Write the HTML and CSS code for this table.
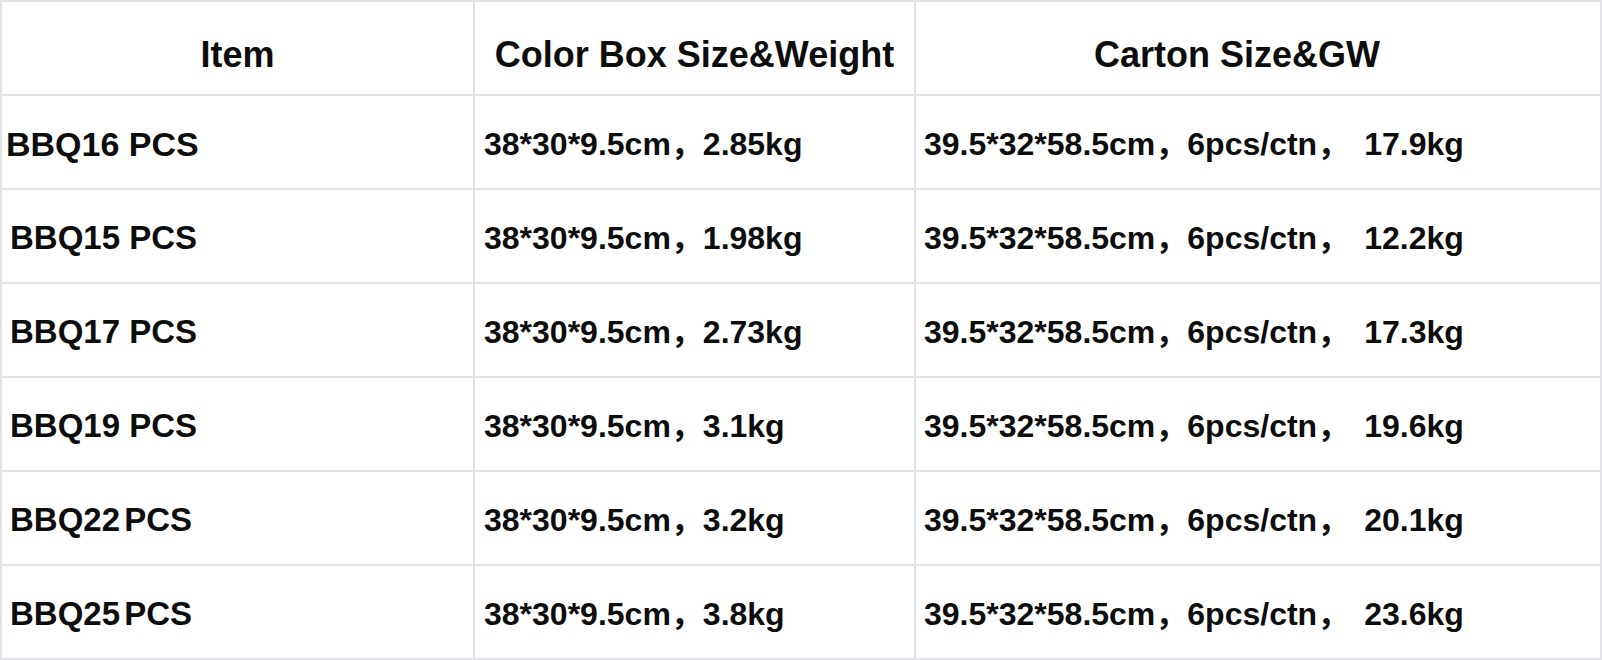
FILE: index.html
```html
<!DOCTYPE html>
<html lang="en">
<head>
<meta charset="utf-8">
<title>Packing specification</title>
<link rel="stylesheet" href="styles.css">
</head>
<body>
<div class="sheet">
  <div class="cell head">Item</div>
  <div class="cell head">Color Box Size&amp;Weight</div>
  <div class="cell head head-carton">Carton Size&amp;GW</div>

  <div class="cell item item-first">BBQ16 PCS</div>
  <div class="cell box">38*30*9.5cm，2.85kg</div>
  <div class="cell carton">39.5*32*58.5cm，6pcs/ctn，<span class="gw">17.9kg</span></div>

  <div class="cell item">BBQ15 PCS</div>
  <div class="cell box">38*30*9.5cm，1.98kg</div>
  <div class="cell carton">39.5*32*58.5cm，6pcs/ctn，<span class="gw">12.2kg</span></div>

  <div class="cell item">BBQ17 PCS</div>
  <div class="cell box">38*30*9.5cm，2.73kg</div>
  <div class="cell carton">39.5*32*58.5cm，6pcs/ctn，<span class="gw">17.3kg</span></div>

  <div class="cell item">BBQ19 PCS</div>
  <div class="cell box">38*30*9.5cm，3.1kg</div>
  <div class="cell carton">39.5*32*58.5cm，6pcs/ctn，<span class="gw">19.6kg</span></div>

  <div class="cell item item-tight">BBQ22 PCS</div>
  <div class="cell box">38*30*9.5cm，3.2kg</div>
  <div class="cell carton">39.5*32*58.5cm，6pcs/ctn，<span class="gw">20.1kg</span></div>

  <div class="cell item item-tight">BBQ25 PCS</div>
  <div class="cell box">38*30*9.5cm，3.8kg</div>
  <div class="cell carton">39.5*32*58.5cm，6pcs/ctn，<span class="gw">23.6kg</span></div>
</div>
</body>
</html>
```

FILE: styles.css
```css
html, body {
  margin: 0;
  padding: 0;
  background: #ffffff;
}

.sheet {
  display: grid;
  grid-template-columns: 471px 439px 684px;
  grid-auto-rows: 92px;
  gap: 2px;
  padding: 2px;
  width: 1602px;
  box-sizing: border-box;
  background: #e1e1e7;
  font-family: "Liberation Sans", "Noto Sans CJK SC", Arial, sans-serif;
  font-weight: bold;
  color: #0d0d0d;
}

.cell {
  background: #ffffff;
  display: flex;
  align-items: center;
  box-sizing: border-box;
  white-space: nowrap;
  font-size: 32px;
  line-height: 36px;
  padding-top: 4px;
}

.head {
  justify-content: center;
  font-size: 36px;
  line-height: 42px;
  padding-top: 13px;
}

.head-carton {
  padding-right: 42px;
}

.item {
  padding-left: 8px;
  font-size: 33px;
}

.item-first {
  padding-left: 4px;
  font-size: 34px;
}

.item-tight {
  word-spacing: -5px;
}

.box {
  padding-left: 9px;
}

.carton {
  padding-left: 8px;
}

.gw {
  margin-left: 15px;
}
```
